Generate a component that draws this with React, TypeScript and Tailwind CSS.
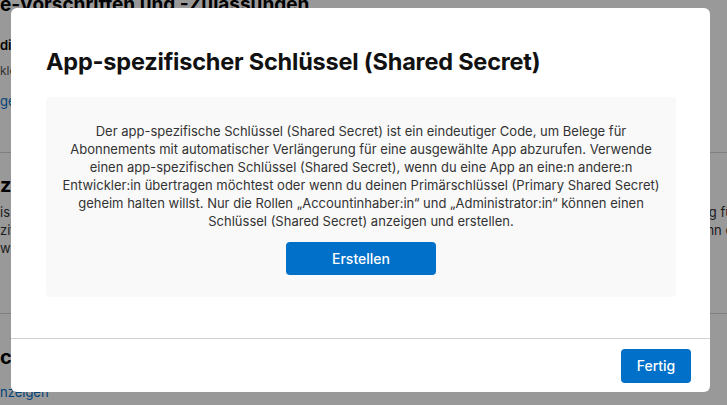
const FONT = "font-['Inter','Noto_Sans',sans-serif]";

const TEXT_LINES = [
  'Der app-spezifische Schlüssel (Shared Secret) ist ein eindeutiger Code, um Belege für',
  'Abonnements mit automatischer Verlängerung für eine ausgewählte App abzurufen. Verwende',
  'einen app-spezifischen Schlüssel (Shared Secret), wenn du eine App an eine:n andere:n',
  'Entwickler:in übertragen möchtest oder wenn du deinen Primärschlüssel (Primary Shared Secret)',
  'geheim halten willst. Nur die Rollen „Accountinhaber:in“ und „Administrator:in“ können einen',
  'Schlüssel (Shared Secret) anzeigen und erstellen.',
];

function BackgroundPage() {
  return (
    <div className={`h-[405px] w-[727px] overflow-hidden bg-white text-black ${FONT}`}>
      <div className="-mt-[8px] whitespace-nowrap">
        <div className="text-[19px] font-bold leading-[26px]">e-Vorschriften und -Zulassungen</div>
        <div className="mt-[18px] text-[13px] font-semibold leading-[18px]">dig</div>
        <div className="mt-[9px] text-[12px] leading-[16px] text-[#555]">kle</div>
        <div className="mt-[13px] text-[13px] leading-[18px] text-[#0070c9]">ge</div>
        <div className="mt-[42px] border-t border-[#d2d2d2]" />
        <div className="mt-[20px] text-[20px] font-bold leading-[24px]">zif</div>
        <div className="mt-[6px] flex justify-between text-[13px] leading-[18px] text-[#333]">
          <span>is</span>
          <span className="-mr-[6px]">g fü</span>
        </div>
        <div className="flex justify-between text-[13px] leading-[18px] text-[#333]">
          <span>zif</span>
          <span className="-mr-[6px]">nn e</span>
        </div>
        <div className="text-[13px] leading-[18px] text-[#333]">wi</div>
        <div className="mt-[56px] border-t border-[#d2d2d2]" />
        <div className="mt-[31px] text-[20px] font-bold leading-[24px]">ch</div>
        <div className="mt-[14px] text-[13px] leading-[18px] text-[#0070c9]">nzeigen</div>
      </div>
    </div>
  );
}

function SharedSecretModal() {
  return (
    <div className="fixed inset-0 flex items-start bg-black/40 pl-[11px] pt-[8px]">
      <div className={`flex h-[384px] w-[699px] flex-col rounded-[6px] bg-white ${FONT}`}>
        <div className="flex-1 px-[35px] pt-[40px]">
          <h2 className="text-[23.5px] font-bold leading-[28px] tracking-[-0.2px] text-[#111]">
            App-spezifischer Schlüssel (Shared Secret)
          </h2>
          <div className="mt-[21px] flex h-[200px] w-[630px] flex-col items-center rounded-[4px] bg-[#f9f9f9] pt-[25px]">
            <p className="text-center text-[13px] leading-[18px] text-[#333]">
              {TEXT_LINES.map((line, i) => (
                <span key={i}>
                  {line}
                  {i < TEXT_LINES.length - 1 && <br />}
                </span>
              ))}
            </p>
            <button className="mt-[12px] h-[33px] w-[150px] rounded-[4px] bg-[#0070c9] text-[14px] font-medium text-white">
              Erstellen
            </button>
          </div>
        </div>
        <div className="flex h-[54px] items-center justify-end border-t border-[#d2d2d2] pr-[19px]">
          <button className="h-[34px] w-[70px] rounded-[4px] bg-[#0070c9] text-[14px] font-medium text-white">
            Fertig
          </button>
        </div>
      </div>
    </div>
  );
}

export default function App() {
  return (
    <>
      <BackgroundPage />
      <SharedSecretModal />
    </>
  );
}
